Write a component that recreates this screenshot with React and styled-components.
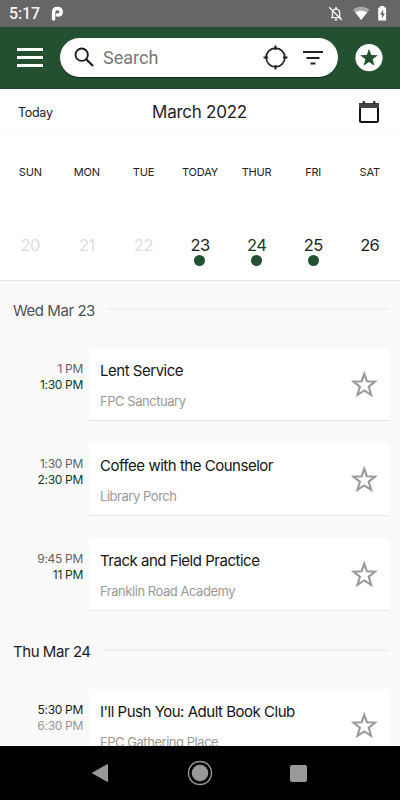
import React from "react";
import styled, { createGlobalStyle } from "styled-components";

const days = [
  { name: "SUN", date: 20, past: true },
  { name: "MON", date: 21, past: true },
  { name: "TUE", date: 22, past: true },
  { name: "TODAY", date: 23, dot: true },
  { name: "THUR", date: 24, dot: true, selected: true },
  { name: "FRI", date: 25, dot: true },
  { name: "SAT", date: 26 },
];

const sections = [
  {
    title: "Wed Mar 23",
    color: "#505050",
    events: [
      { start: "1 PM", end: "1:30 PM", title: "Lent Service", place: "FPC Sanctuary", now: true },
      { start: "1:30 PM", end: "2:30 PM", title: "Coffee with the Counselor", place: "Library Porch", now: true },
      { start: "9:45 PM", end: "11 PM", title: "Track and Field Practice", place: "Franklin Road Academy", now: true },
    ],
  },
  {
    title: "Thu Mar 24",
    color: "#1c1c1c",
    events: [
      { start: "5:30 PM", end: "6:30 PM", title: "I'll Push You: Adult Book Club", place: "FPC Gathering Place" },
    ],
  },
];

const StatusIcons = () => (
  <StatusSvg width="60" height="18" viewBox="0 0 60 18">
    <g transform="translate(-.6 0) scale(.72)" fill="none" stroke="#f2f2f2" strokeWidth="2">
      <path d="M7 17v-6c0-3 2-5.300 5-5.300s5 2.300 5 5.300v6M5 17.500h14" />
      <path d="M2.500 3l17.500 18" />
      <path d="M12 3v3M10.300 20.300h3.400" strokeWidth="2.600" />
    </g>
    <path d="M25 4.700C30 .9 36.400 .9 41.400 4.700L33.200 15Z" fill="#a9a9a9" />
    <path d="M27.300 7.600C31 5.200 35.400 5.200 39.100 7.600L33.200 15Z" fill="#fff" />
    <path d="M52 1h4.300v1.600h1.800v13h-7.900v-13H52Z" fill="#fff" />
    <path d="M55.300 4.500l-3.300 5h1.900v4l3-5h-1.800Z" fill="#666" />
  </StatusSvg>
);

const EventRow = ({ event }) => (
  <Row>
    <Times>
      <Time $color={event.now ? "#626262" : "#1c1c1c"}>{event.start}</Time>
      <Time $color={event.now ? "#0b3d1c" : "#979797"}>{event.end}</Time>
    </Times>
    <Card>
      <CardText>
        <EventTitle>{event.title}</EventTitle>
        <Place>{event.place}</Place>
      </CardText>
      <svg width="26" height="26" viewBox="0 0 26 26">
        <path
          d="M13.300 2.800L15.900 10.200L24.200 10.600L17.700 15.600L20.100 23.800L13.300 19.400L6.500 23.800L8.900 15.600L2.400 10.600L10.700 10.200Z"
          fill="none"
          stroke="#999"
          strokeWidth="2.100"
        />
      </svg>
    </Card>
  </Row>
);

const App = () => {
  return (
    <Screen>
      <GlobalStyle />
      <StatusBar>
        <Clock>5:17</Clock>
        <svg width="13" height="16" viewBox="0 0 13 16">
          <path
            d="M2.600 13V6.600C2.600 4.100 4 2.500 6.400 2.500S10.200 4 10.200 6S8.700 9.100 6.400 9.100"
            fill="none"
            stroke="#fff"
            strokeWidth="3.500"
            strokeLinecap="round"
          />
        </svg>
        <StatusIcons />
      </StatusBar>
      <Header>
        <Menu>
          <span />
          <span />
          <span />
        </Menu>
        <SearchBar>
          <svg width="28" height="28" viewBox="0 0 28 28" fill="none" stroke="#1c1c1c">
            <circle cx="7.700" cy="10.700" r="6.200" strokeWidth="1.900" />
            <path d="M12 15L19 22" strokeWidth="2.300" />
          </svg>
          <Placeholder>Search</Placeholder>
          <svg width="26" height="26" viewBox="0 0 26 26" fill="none" stroke="#222">
            <circle cx="12.500" cy="12.500" r="9.400" strokeWidth="1.700" />
            <path d="M12.500 .6v4.500M12.500 20V24.500M.6 12.500h4.500M20 12.500h4.500" strokeWidth="1.900" />
          </svg>
          <FilterLines>
            <path d="M0 1h20M3.500 7h13M7.500 12.500h5" />
          </FilterLines>
        </SearchBar>
        <svg width="28" height="28" viewBox="0 0 28 28">
          <circle cx="14" cy="13.700" r="13.600" fill="#fff" />
          <path
            d="M14 4.800L16.200 11.100L22.900 11.300L17.600 15.300L19.500 21.800L14 18L8.500 21.800L10.400 15.300L5.100 11.300L11.800 11.100Z"
            fill="#235031"
          />
        </svg>
      </Header>
      <MonthBar>
        <TodayButton>Today</TodayButton>
        <Month>March 2022</Month>
        <CalendarSlot>
          <svg width="22" height="24" viewBox="0 0 22 24">
            <rect x="2" y="4" width="18" height="18" rx="1" fill="none" stroke="#111" strokeWidth="2" />
            <path d="M1 3h20v5H1z" fill="#444" />
            <path d="M5.700 1v3M16.300 1v3" stroke="#222" strokeWidth="2" />
          </svg>
        </CalendarSlot>
      </MonthBar>
      <Week>
        {days.map((day) => (
          <Day key={day.name}>
            <DayName>{day.name}</DayName>
            <DayNumber $past={day.past} $selected={day.selected}>
              {day.date}
            </DayNumber>
            {day.dot && <Dot />}
          </Day>
        ))}
      </Week>
      <List>
        {sections.map((section) => (
          <section key={section.title}>
            <SectionHeader>
              <SectionTitle $color={section.color}>{section.title}</SectionTitle>
              <Rule />
            </SectionHeader>
            {section.events.map((event) => (
              <EventRow key={event.title} event={event} />
            ))}
          </section>
        ))}
      </List>
      <NavBar>
        <svg width="18" height="20" viewBox="0 0 18 20">
          <path d="M16.500 1.500v17L1.500 10Z" fill="#999" stroke="#999" strokeLinejoin="round" />
        </svg>
        <svg width="26" height="26" viewBox="0 0 26 26">
          <circle cx="13" cy="13" r="11.500" fill="none" stroke="#999" strokeWidth="1.400" />
          <circle cx="13" cy="13" r="8.300" fill="#999" />
        </svg>
        <Recents />
      </NavBar>
    </Screen>
  );
};

export default App;

const GlobalStyle = createGlobalStyle`
  * {
    box-sizing: border-box;
  }
  body {
    margin: 0;
    font-family: Inter, sans-serif;
  }
  svg {
    display: block;
    flex-shrink: 0;
  }
`;

const Screen = styled.div`
  width: 400px;
  height: 800px;
  display: flex;
  flex-direction: column;
  overflow: hidden;
  background: #fafafa;
  white-space: nowrap;
`;
const StatusBar = styled.div`
  height: 27px;
  flex-shrink: 0;
  display: flex;
  align-items: center;
  padding: 1px 12px 0 9px;
  background: #666;
`;
const Clock = styled.span`
  width: 42px;
  font: 500 16px/26px Roboto, sans-serif;
  letter-spacing: -0.1px;
  color: #f4f4f4;
`;
const StatusSvg = styled.svg`
  margin-left: auto;
`;
const Header = styled.header`
  height: 62px;
  flex-shrink: 0;
  display: flex;
  align-items: center;
  padding: 0 17px;
  background: #235031;
`;
const Menu = styled.div`
  width: 43px;
  display: flex;
  flex-direction: column;
  gap: 5px;
  margin-bottom: 1px;

  span {
    width: 26px;
    height: 3px;
    background: #fff;
  }
`;
const SearchBar = styled.div`
  width: 278px;
  height: 39px;
  display: flex;
  align-items: center;
  margin: 0 17px 1px 0;
  padding: 1px 15px 0 14px;
  border-radius: 20px;
  background: #fff;
  box-shadow: 0 1px 1px rgba(0, 0, 0, 0.5);
`;
const Placeholder = styled.span`
  flex: 1;
  padding-left: 1px;
  font: 400 18px/24px Roboto, sans-serif;
  color: #777;
`;
const FilterLines = styled.svg.attrs({ viewBox: "0 0 20 14" })`
  width: 20px;
  height: 14px;
  margin-left: 14px;
  fill: none;
  stroke: #222;
  stroke-width: 1.8;
`;
const MonthBar = styled.div`
  height: 46px;
  flex-shrink: 0;
  display: grid;
  grid-template-columns: 1fr auto 1fr;
  align-items: center;
  padding: 0 20px 0 18px;
  border-bottom: 1px solid #f5f5f5;
  background: #fff;
`;
const TodayButton = styled.span`
  padding-top: 1px;
  font-size: 12.5px;
  letter-spacing: -0.3px;
  color: #222;
`;
const Month = styled.span`
  padding: 1px 0 0 1px;
  font-size: 17px;
  letter-spacing: -0.25px;
  color: #222;
`;
const CalendarSlot = styled.div`
  display: flex;
  justify-content: flex-end;
`;
const Week = styled.div`
  height: 146px;
  flex-shrink: 0;
  display: grid;
  grid-template-columns: repeat(7, 1fr);
  padding: 28px 2px 0;
  border-bottom: 1px solid #e8e8e8;
  background: #fff;
`;
const Day = styled.div`
  display: flex;
  flex-direction: column;
  align-items: center;
`;
const DayName = styled.span`
  font-size: 11px;
  line-height: 18px;
  letter-spacing: -0.2px;
  color: #222;
`;
const DayNumber = styled.span`
  margin-top: 54px;
  font-size: 16.5px;
  line-height: 20px;
  letter-spacing: -0.6px;
  color: ${(props) => (props.$past ? "#ddd" : props.$selected ? "#144021" : "#1c1c1c")};
`;
const Dot = styled.span`
  width: 11px;
  height: 11px;
  border-radius: 50%;
  background: #235031;
`;
const List = styled.main`
  flex: 1;
  min-height: 0;
  padding: 11px 11px 0 13px;
  overflow: hidden;
`;
const SectionHeader = styled.div`
  height: 56px;
  display: flex;
  align-items: center;
  gap: 12px;
  padding-bottom: 20px;
`;
const SectionTitle = styled.h2`
  margin: 0;
  font-size: 15px;
  font-weight: 400;
  letter-spacing: -0.45px;
  color: ${(props) => props.$color};
`;
const Rule = styled.div`
  flex: 1;
  height: 2px;
  margin-bottom: 2px;
  background: #f1f1f1;
`;
const Row = styled.div`
  height: 73px;
  display: flex;
  margin-bottom: 22px;
`;
const Times = styled.div`
  width: 76px;
  display: flex;
  flex-direction: column;
  align-items: flex-end;
  padding: 13px 6px 0 0;
`;
const Time = styled.span`
  font-size: 12px;
  line-height: 16.4px;
  letter-spacing: -0.3px;
  color: ${(props) => props.$color};
`;
const Card = styled.div`
  flex: 1;
  display: flex;
  align-items: center;
  padding: 0 12px 0 11px;
  border-bottom: 1px solid #e6e6e6;
  background: #fff;
`;
const CardText = styled.div`
  flex: 1;
  height: 100%;
  padding-top: 13px;
`;
const EventTitle = styled.div`
  font-size: 15px;
  line-height: 20px;
  letter-spacing: -0.48px;
  color: #151515;
`;
const Place = styled.div`
  margin-top: 10px;
  font-size: 13px;
  line-height: 20px;
  letter-spacing: -0.46px;
  color: #999;
`;
const NavBar = styled.nav`
  height: 54px;
  flex-shrink: 0;
  display: flex;
  align-items: center;
  justify-content: space-between;
  padding: 0 93px 0 91px;
  background: #000;
`;
const Recents = styled.span`
  width: 17px;
  height: 17px;
  border-radius: 2px;
  background: #999;
`;
